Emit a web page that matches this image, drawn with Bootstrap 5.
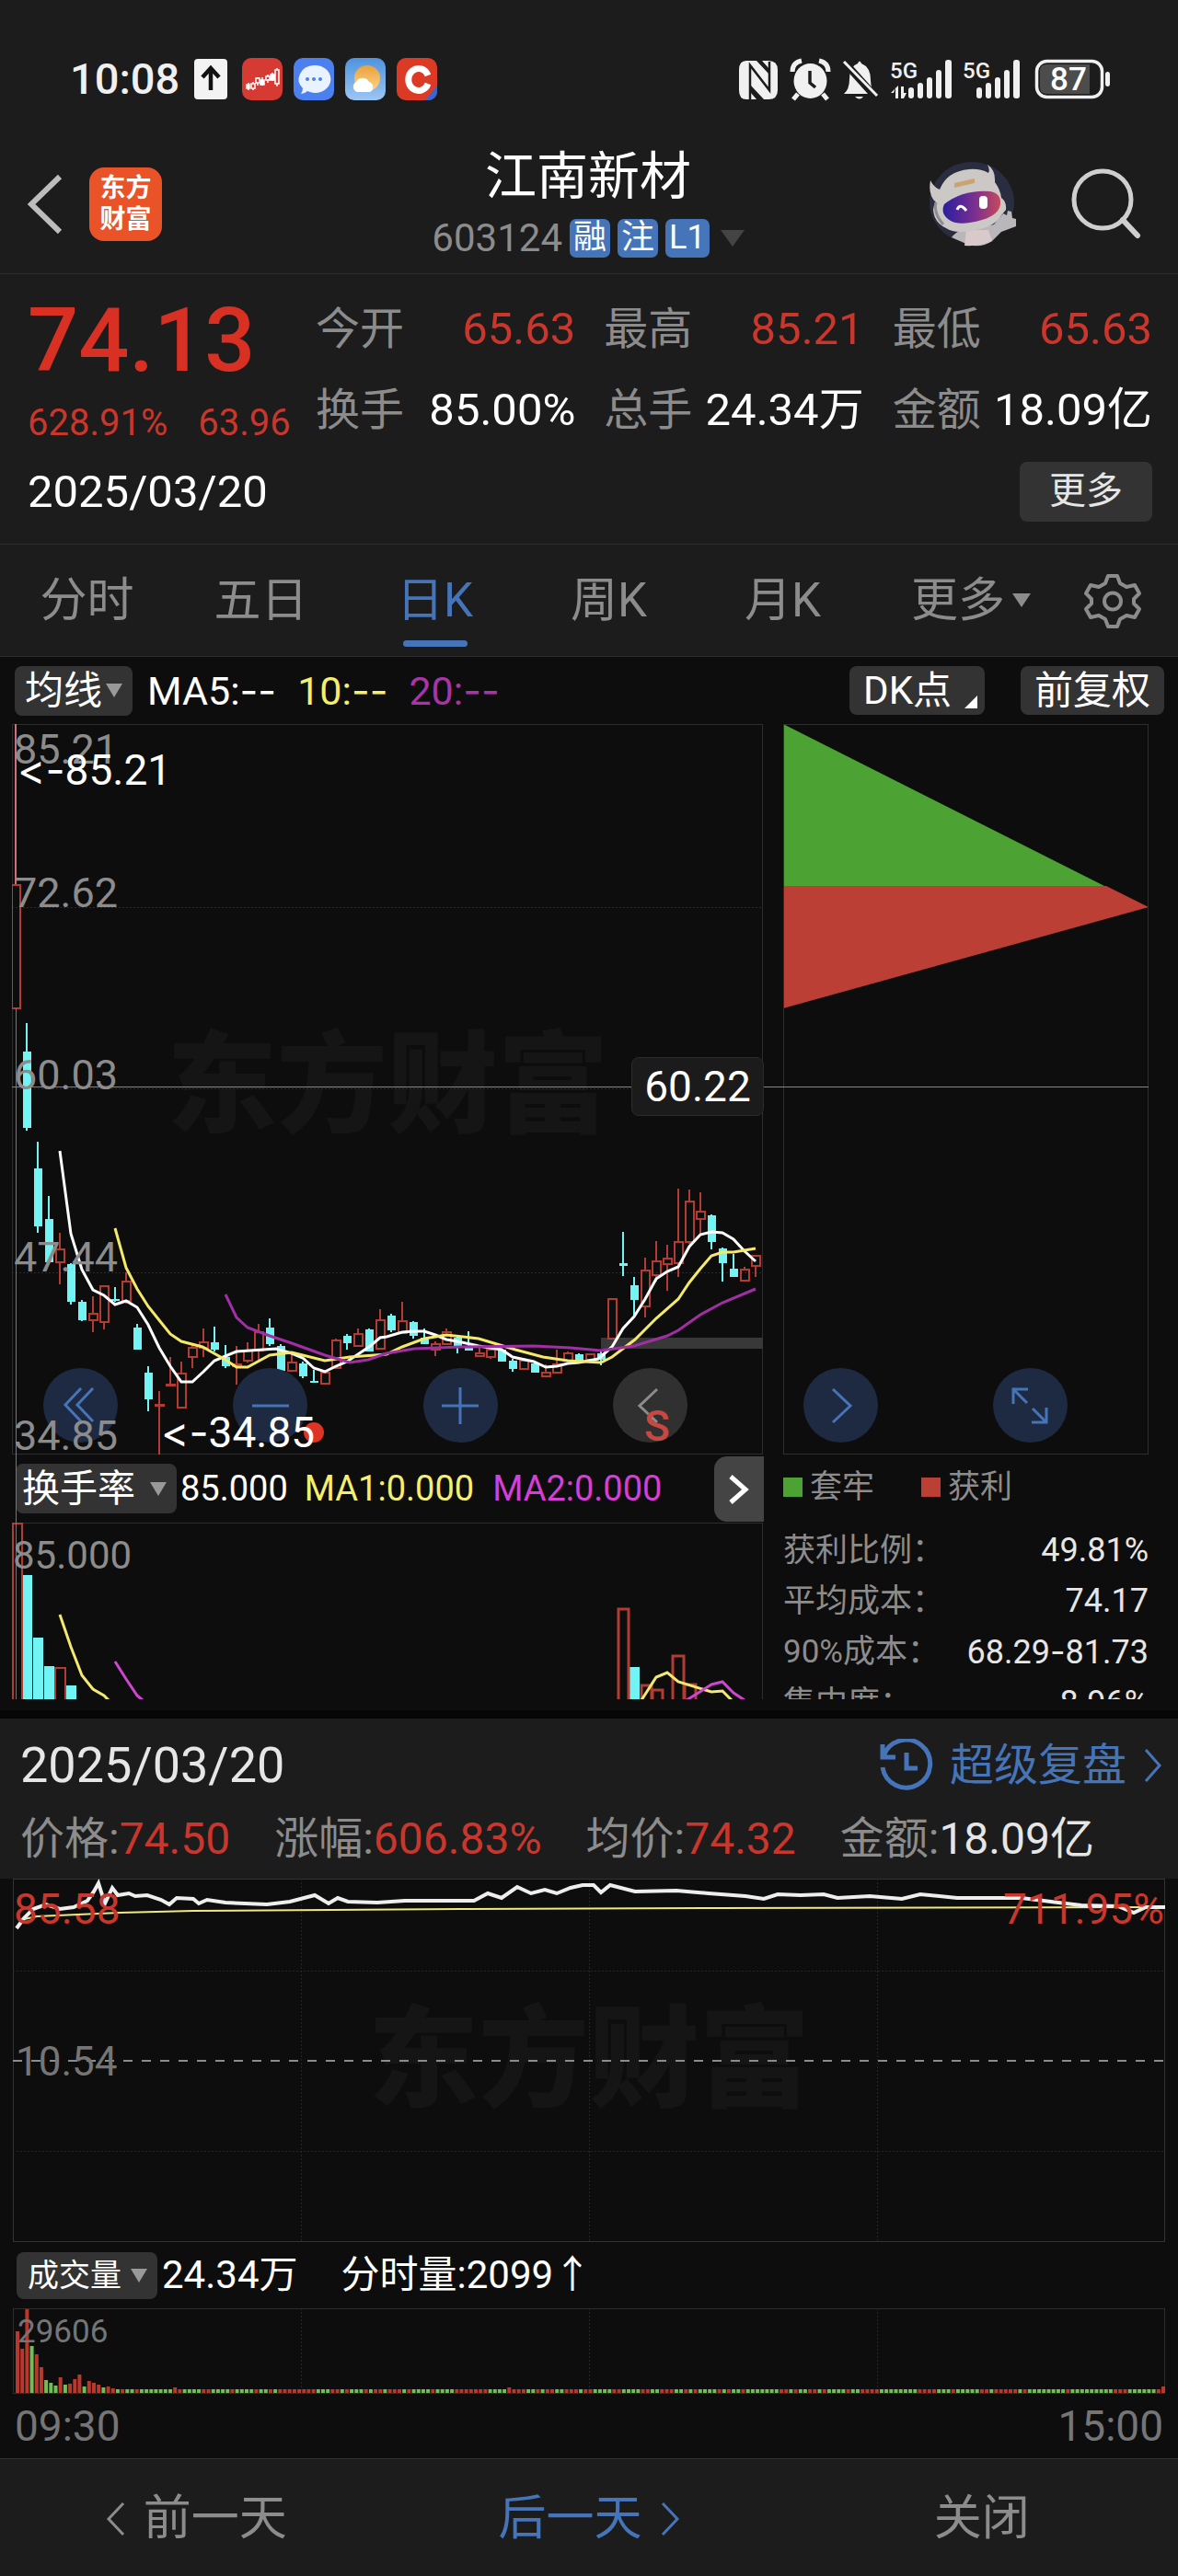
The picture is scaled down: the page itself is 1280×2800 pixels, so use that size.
<!DOCTYPE html>
<html lang="zh-CN">
<head>
<meta charset="utf-8">
<meta name="viewport" content="width=device-width, initial-scale=1">
<title>江南新材 603124</title>
<link href="https://cdn.jsdelivr.net/npm/bootstrap@5.3.0/dist/css/bootstrap.min.css" rel="stylesheet">
<style>
:root{--panel:#1c1c1c;--chart:#0d0d0d;--rule:#2d2d2d;--muted:#8c8c8c;--up:#c9372c;--blue:#4674b8;--pill:#333}
body{background:var(--panel);color:#fff;font-family:Roboto,"Noto Sans CJK SC",sans-serif;font-size:48px;line-height:1;overflow-x:hidden}
button{background:none;border:0;padding:0;color:inherit;font:inherit}
a{text-decoration:none;color:inherit}
svg{display:block;flex:none}
.t-muted{color:var(--muted)}.t-up{color:var(--up)}.t-blue{color:var(--blue)}
.t-yellow{color:#f5ee6e}.t-purple{color:#a835a8}.t-pink{color:#d63ed6}
.dash{font-family:Inter,sans-serif;font-variant-ligatures:none;font-feature-settings:"calt" 0}
.status{padding:56px 72px 34px 76px;height:150px}
.clock{font-size:47px;font-weight:500;line-height:60px;color:#f0f0f0}
.status svg{overflow:visible}
.head{padding:12px 32px 16px 30px;border-bottom:1px solid var(--rule)}
.title{font-size:56px;line-height:60px;font-weight:400}
.code{font-size:42px;line-height:44px;margin-top:15px;gap:8px}
.tagbox{background:var(--blue);border-radius:7px;height:42px;min-width:42px;padding:0 4px;font-size:36px;line-height:41px;text-align:center}
.brand{width:79px;height:80px;border-radius:16px;background:#ea5328;font-size:28px;font-weight:700;line-height:34px;padding-top:6px;text-align:center;margin-left:29px}
.side{flex:1 1 0}
.seek{margin-left:60px}
.quote{padding:16px 28px 13px 30px;border-bottom:1px solid var(--rule)}
.q-main{width:313px;padding-top:8px}
.q-price{font-size:97px;line-height:96px;font-weight:500;color:#d93024}
.q-sub{font-size:40px;line-height:60px;margin-top:12px;gap:33px}
.q-grid{display:grid;grid-template-columns:repeat(3,1fr);column-gap:31px;line-height:88px;flex:1}
.q-num,.q-date{font-size:49px}
.q-date{height:88px}
.btn-more{background:var(--pill);border-radius:8px;width:144px;height:65px;font-size:40px;color:#e6e6e6}
.tabs{height:122px;border-bottom:1px solid var(--rule);font-size:51px}
.tabs a,.tabs button{flex:189 1 0;height:121px;line-height:121px;text-align:center;position:relative;color:var(--muted)}
.tabs .more-tab{flex-grow:220}
.tabs .gear{flex-grow:87;margin-right:28px}
.tabs .active{color:var(--blue)}
.tabs .active::after{content:"";position:absolute;left:50%;bottom:10px;width:70px;height:7px;margin-left:-35px;border-radius:4px;background:var(--blue)}
.board{background:var(--chart);padding-bottom:12px;border-bottom:9px solid #060606}
.tools{height:73px;padding:0 15px 0 16px;font-size:42px}
.ma-list{font-size:43px;gap:23px;margin-left:16px}
.pick{appearance:none;border:0;border-radius:8px;color:#fff;background:var(--pill) url("data:image/svg+xml,%3Csvg xmlns='http://www.w3.org/2000/svg' viewBox='0 0 18 15'%3E%3Cpath d='M0 0h18L9 15z' fill='%23999'/%3E%3C/svg%3E") no-repeat right 11px center/18px 15px;height:54px;line-height:54px;padding:0 8px 0 11px;font-family:inherit}
.pick-ma{width:128px;font-size:42px}
.pick-turn{width:175px;font-size:41px;padding-left:7px;margin-left:4px}
.pick-vol{width:153px;font-size:34px;padding-left:12px;height:51px;line-height:51px}
.chip{background:var(--pill);border-radius:8px;height:53px;font-size:42px;line-height:53px;padding:0 15px;position:relative}
.chip-dk{padding-right:36px}
.chip-dk::after{content:"";position:absolute;right:8px;bottom:7px;border-left:14px solid transparent;border-bottom:14px solid #fff}
.charts{position:relative;padding:0 32px 0 13px;gap:22px;height:1060px;overflow:hidden}
.col-k{flex:816 1 0;min-width:0;position:relative}
.col-c{flex:397 1 0;min-width:0}
.col-k>svg,.col-c>svg,.minute svg{width:100%}
.cross{position:absolute;left:13px;right:32px;top:394px;height:1px;background:#858585}
.over{position:absolute;white-space:nowrap}
.axis{left:2px;top:5px;height:792px;font-size:45px;color:var(--muted);line-height:45px}
.axis span{position:absolute;left:0}
.water{font-size:120px;font-weight:900;color:#151515;line-height:120px}
.flag{background:#1b1b1b;border:1px solid #2b2b2b;border-radius:8px;font-size:46px;line-height:62px;width:144px;text-align:center;right:-1px;top:362px}
.pads{left:47px;right:120px;top:700px}
.pad{width:81px;height:81px;border-radius:50%;background:#1d2a42;color:var(--blue)}
.pad svg{margin:auto}
.pad-off{background:#303030;color:#8c8c8c}
.turn{height:74px;font-size:38px}
.next-ind{position:absolute;right:-1px;top:796px;width:54px;height:71px;background:#444;border-radius:14px 0 0 14px}
.legend{height:70px;font-size:35px;gap:8px}
.legend i{width:21px;height:21px}
.cost{font-size:35px;line-height:55px;margin:0;padding-top:7px}
.cost dt{font-weight:400;color:var(--muted)}
.cost dd{margin:0;font-size:36px;color:#e6e6e6}
.replay{padding:15px 16px 7px 22px}
.replay-head{font-size:54px;line-height:72px;color:#e6e6e6}
.replay-link{font-size:48px;gap:18px}
.facts{line-height:72px;margin-top:8px;gap:48px;color:#e6e6e6}
.minute{background:var(--chart);padding:0 14px}
.plot{position:relative}
.volrow{height:72px;font-size:42px;gap:5px;padding-left:4px}
.times{font-size:46px;line-height:70px;color:#757575;padding:0 2px}
.days{border-top:1px solid #333;height:128px;font-size:52px}
.days button{flex:1 1 0;gap:19px;padding-top:2px}
</style>
</head>
<body>
<header>
<div class="status d-flex justify-content-between align-items-center">
  <div class="d-flex align-items-center">
    <span class="clock">10:08</span>
    <svg class="ms-3" width="265" height="46" viewBox="0 0 265 46">
      <defs><linearGradient id="sky" x2="0" y2="1"><stop stop-color="#4f93dd"/><stop offset="1" stop-color="#9cc6f4"/></linearGradient><linearGradient id="sun" x2="0" y2="1"><stop stop-color="#e8a13c"/><stop offset="1" stop-color="#ffd489"/></linearGradient></defs>
      <rect y="1" width="36" height="44" rx="4" fill="#f3f3f3"/><path d="M18 35V13M9 21l9-10 9 10" fill="none" stroke="#111" stroke-width="4.5"/>
      <rect x="52" width="44" height="46" rx="10" fill="#d63a33"/><g stroke="#fff" stroke-width="1.5" fill="none"><path d="M59 27v8M64 26v9M69 21v9M74 21v9M80 18v9M85 16v9M90 11v20"/><path d="M57 29h3v4h-3zM72 24h4v5h-4zM83 18h4v6h-4z" fill="#fff"/><path d="M62 28h4v5h-4zM67 22h4v5h-4zM78 20h4v4h-4zM88 13h4v15h-4z" fill="#d63a33"/></g>
      <rect x="108" width="44" height="46" rx="10" fill="#4b80ee"/><path d="M130 8a17 15 0 1 1-7 28q-3 3-7 3 2-3 2-6A17 15 0 0 1 130 8z" fill="#e8f3ff"/><g fill="#4b80ee"><circle cx="123" cy="23" r="2"/><circle cx="130" cy="23" r="2"/><circle cx="137" cy="23" r="2"/></g>
      <rect x="164" width="44" height="46" rx="10" fill="url(#sky)"/><circle cx="188" cy="22" r="14" fill="url(#sun)"/><path d="M177 37a6 6 0 0 1-1-11 8 8 0 0 1 14 0 6 6 0 0 1 1 11z" fill="#fff"/>
      <rect x="220" width="44" height="46" rx="10" fill="#dc3a24"/><path d="M254 19a11 12 0 1 0 0 9" fill="none" stroke="#fff" stroke-width="7"/><path d="M264 30v7a9 9 0 0 1-9 9h-4z" fill="#3a66d0"/>
    </svg>
  </div>
  <svg width="405" height="46" viewBox="804 63 405 46">
    <g fill="#f0f0f0"><path d="M812 66h11l14 15v-6l-8-9h7q10 0 10 10v22q0 10-10 10h-5l-14-15v8l6 7h-11q-8 0-8-10V76q0-10 8-10z"/><path d="M816 108V71l21 27V67" fill="none" stroke="#1c1c1c" stroke-width="2.5"/>
    <ellipse cx="881.500" cy="88" rx="18" ry="19"/><path d="M862 78q0-10 10-12M901 78q0-10-10-12M868 102l-5 6M895 102l5 6" stroke="#f0f0f0" stroke-width="5" fill="none"/><path d="M881 77v13l6 5" fill="none" stroke="#1c1c1c" stroke-width="3.500"/>
    <path d="M918 102q6-5 6-16 0-14 9-17 2-5 4 0 10 4 10 18 0 10 6 15zM930 105h9q-4 5-9 0z"/><path d="M917 66l36 40" stroke="#1c1c1c" stroke-width="8"/><path d="M918 67l36 37" stroke="#f0f0f0" stroke-width="3"/>
    <rect x="988" y="95" width="6" height="12" rx="3"/><rect x="998" y="90" width="6" height="17" rx="3"/><rect x="1008" y="84" width="6" height="23" rx="3"/><rect x="1018" y="76" width="6" height="31" rx="3"/><rect x="1028" y="65" width="7" height="42" rx="3"/>
    <path d="M974 95v12h3V93l-8 8h3zM983 107l3-6h-3V94h-3v13z"/>
    <rect x="1062" y="95" width="6" height="12" rx="3"/><rect x="1072" y="90" width="6" height="17" rx="3"/><rect x="1082" y="84" width="6" height="23" rx="3"/><rect x="1092" y="76" width="6" height="31" rx="3"/><rect x="1102" y="65" width="7" height="42" rx="3"/>
    <text x="968" y="85" font-size="24" font-weight="500">5G</text><text x="1047" y="85" font-size="24" font-weight="500">5G</text></g>
    <rect x="1127.500" y="66.500" width="71" height="39" rx="11" fill="none" stroke="#f0f0f0" stroke-width="3.500"/><path d="M1138 70h47v32h-47q-7 0-7-7V77q0-7 7-7z" fill="#4c4c4c"/><rect x="1202" y="78" width="5" height="16" rx="3" fill="#f0f0f0"/>
    <text x="1162" y="98" font-size="35" font-weight="500" fill="#fff" text-anchor="middle">87</text>
  </svg>
</div>
<nav class="head d-flex align-items-center" aria-label="股票">
  <div class="side d-flex align-items-center">
    <button aria-label="返回"><svg width="38" height="66" viewBox="0 0 38 66"><path d="M35 3L4 33l31 30" fill="none" stroke="#bdbdbd" stroke-width="6"/></svg></button>
    <a href="#" class="brand text-white">东方<br>财富</a>
  </div>
  <div class="text-center">
    <h1 class="title m-0">江南新材</h1>
    <div class="code d-flex align-items-center justify-content-center"><span class="t-muted">603124</span><span class="tagbox">融</span><span class="tagbox">注</span><span class="tagbox">L1</span><svg class="ms-1" width="26" height="18"><path d="M0 0h26L13 18z" fill="#444"/></svg></div>
  </div>
  <div class="side d-flex align-items-center justify-content-end">
    <a href="#" aria-label="助手"><svg width="98" height="96" viewBox="0 0 98 96"><defs><linearGradient id="visor"><stop stop-color="#2a1ea0"/><stop offset=".55" stop-color="#7a2f90"/><stop offset="1" stop-color="#c64a5c"/></linearGradient></defs>
      <ellipse cx="50" cy="46" rx="46" ry="44" fill="#2a2c40"/><path d="M28 84q10-12 22-8l24-6 10-12 4 2 1-5 4 1 1 7 4 1v8l-16 6-10 10q-12 8-26 4z" fill="#b9b7ba"/><path d="M44 76h24l4 12q-12 6-30 5z" fill="#d9c9cb"/><path d="M5 22q4 8 10 10 8-20 32-22 12-1 21 4 2-3-1-9 9 6 8 19 6 8 7 17 6 4 5 13l-5 6q-6 12-28 16-22 5-32-2Q9 68 8 54q0-4 3-8Q2 38 5 22z" fill="#cbc8c6"/><path d="M20 48q20-16 50-14 12 2 11 14-2 12-20 17-24 7-34 1-12-7-7-18z" fill="url(#visor)"/><path d="M34 54q3-8 10 1" fill="none" stroke="#fff" stroke-width="3"/><rect x="58" y="39" width="9" height="14" rx="4" fill="#fff"/><path d="M31 25l22-5v5l-22 5z" fill="#caa36f"/><path d="M11 46q-3 12 8 24" stroke="#8f8d90" stroke-width="3" fill="none"/></svg></a>
    <button class="seek" aria-label="搜索"><svg width="84" height="80" viewBox="0 0 84 80"><circle cx="34" cy="35" r="31" fill="none" stroke="#cfcfcf" stroke-width="5"/><path d="M56 57l16 17" stroke="#cfcfcf" stroke-width="6" stroke-linecap="round"/></svg></button>
  </div>
</nav>
</header>
<main>
<section class="quote">
  <div class="d-flex">
    <div class="q-main"><div class="q-price">74.13</div><div class="q-sub d-flex t-up"><span>628.91%</span><span>63.96</span></div></div>
    <div class="q-grid">
      <div class="d-flex justify-content-between"><span class="t-muted">今开</span><span class="q-num t-up">65.63</span></div>
      <div class="d-flex justify-content-between"><span class="t-muted">最高</span><span class="q-num t-up">85.21</span></div>
      <div class="d-flex justify-content-between"><span class="t-muted">最低</span><span class="q-num t-up">65.63</span></div>
      <div class="d-flex justify-content-between"><span class="t-muted">换手</span><span class="q-num">85.00%</span></div>
      <div class="d-flex justify-content-between"><span class="t-muted">总手</span><span class="q-num">24.34万</span></div>
      <div class="d-flex justify-content-between"><span class="t-muted">金额</span><span class="q-num">18.09亿</span></div>
    </div>
  </div>
  <div class="q-date d-flex justify-content-between align-items-center"><span>2025/03/20</span><button class="btn-more">更多</button></div>
</section>
<nav class="tabs d-flex" aria-label="周期">
  <a href="#">分时</a><a href="#">五日</a><a href="#" class="active">日K</a><a href="#">周K</a><a href="#">月K</a>
  <button class="more-tab d-flex align-items-center justify-content-center">更多<svg class="ms-2" width="20" height="15"><path d="M0 0h20L10 15z" fill="#8c8c8c"/></svg></button>
  <button class="gear d-flex align-items-center justify-content-center" aria-label="设置"><svg width="64" height="64" viewBox="0 0 64 64" fill="none" stroke="#8c8c8c" stroke-width="4" stroke-linejoin="round"><path d="M27 5h10l3 8 7 4 9-2 5 9-6 6v5l6 6-5 9-9-2-7 4-3 8H27l-3-8-7-4-9 2-5-9 6-6v-5l-6-6 5-9 9 2 7-4z"/><circle cx="32" cy="32.500" r="9"/></svg></button>
</nav>
<section class="board">
  <div class="tools d-flex align-items-center">
    <select class="pick pick-ma" aria-label="主图指标"><option>均线</option></select>
    <div class="ma-list d-flex"><span>MA5:<span class="dash">--</span></span><span class="t-yellow">10:<span class="dash">--</span></span><span class="t-purple">20:<span class="dash">--</span></span></div>
    <button class="chip chip-dk ms-auto">DK点</button><button class="chip" style="margin-left:39px">前复权</button>
  </div>
  <div class="charts d-flex">
    <div class="col-k">
      <div class="over water" style="left:168px;top:334px">东方财富</div>
      <svg class="position-relative" height="794" viewBox="13 787 816 794" preserveAspectRatio="none" id="kline">
        <rect x="13.500" y="787.500" width="815" height="793" fill="none" stroke="#2d2d2d"/>
        <path d="M13 986.500h816M13 1183.500h816M13 1383.500h816" stroke="#2b2b2b" stroke-dasharray="2 2"/>
        <rect x="653" y="1454" width="176" height="12" fill="#383838"/>
      </svg>
      <div class="turn d-flex align-items-center">
        <select class="pick pick-turn" aria-label="副图指标"><option>换手率</option></select>
        <span class="ms-1">85.000</span><span class="t-yellow" style="margin-left:18px">MA1:0.000</span><span class="t-pink" style="margin-left:20px">MA2:0.000</span>
      </div>
      <svg height="192" viewBox="13 1655 816 192" preserveAspectRatio="none">
        <path d="M13 1655.500h816M828.500 1655v192" stroke="#2d2d2d" fill="none"/>
        <g fill="#72f4f4"><path d="M24 1712h11v135H24zM36 1780h11v67H36zM48 1811h11v36H48zM72 1832h11v15H72zM684 1812h11v35h-11z"/></g>
        <g fill="none" stroke="#b03c34" stroke-width="2"><path d="M14 1850v-194h10v194M60 1850v-37h11v37"/><path d="M672 1850v-101h11v101M697 1850v-18h11v18M709 1850v-13h11v13M731 1850v-50h12v50M744 1850v-19h12v19" stroke-width="3"/></g>
        <path d="M65 1755l12 35 12 31 12 15 12 7 5 5M697 1848l16-25 12-5 12 10 36 11 12-1 10 10" fill="none" stroke="#f3e971" stroke-width="3"/>
        <path d="M125 1806l12 19 12 18 6 5M746 1848l27-17 12-3 12 12 12 8" fill="none" stroke="#cf45cf" stroke-width="3"/>
      </svg>
      <div class="over" style="left:4px;top:309px;width:1px;height:751px;background:#777"></div>
      <div class="over t-muted" style="left:1px;top:883px;font-size:42px">85.000</div>
    </div>
    <div class="col-c">
      <svg height="794" viewBox="851 787 397 794" preserveAspectRatio="none">
        <path d="M851 787l349 176H851z" fill="#4ca334"/><path d="M851 963h351l46 23-397 110z" fill="#bc3f36"/><path d="M1195 963l-344-175v175z" fill="#4ca334"/>
        <rect x="851.500" y="787.500" width="396" height="793" fill="none" stroke="#2f2f2f"/>
      </svg>
      <div class="legend d-flex align-items-center t-muted"><i style="background:#4ca334"></i><span>套牢</span><i style="background:#bc3f36;margin-left:43px"></i><span>获利</span></div>
      <dl class="cost">
        <div class="d-flex justify-content-between"><dt>获利比例：</dt><dd>49.81%</dd></div>
        <div class="d-flex justify-content-between"><dt>平均成本：</dt><dd>74.17</dd></div>
        <div class="d-flex justify-content-between"><dt>90%成本：</dt><dd>68.29<span class="dash">-</span>81.73</dd></div>
        <div class="d-flex justify-content-between"><dt>集中度：</dt><dd>8.96%</dd></div>
      </dl>
    </div>
    <div class="cross"></div>
    <div class="over pads d-flex justify-content-between">
      <button class="pad" aria-label="最早"><svg width="40" height="40" fill="none" stroke="currentColor" stroke-width="3"><path d="M20 1L3 19l17 18M33 1L16 19l17 18"/></svg></button>
      <button class="pad" aria-label="缩小"><svg width="40" height="40" stroke="currentColor" stroke-width="3"><path d="M0 20h40"/></svg></button>
      <button class="pad" aria-label="放大"><svg width="40" height="40" stroke="currentColor" stroke-width="3"><path d="M0 20h40M20 0v40"/></svg></button>
      <button class="pad pad-off" aria-label="向左"><svg width="40" height="40" fill="none" stroke="currentColor" stroke-width="3"><path d="M27 2L8 20l19 18"/></svg></button>
      <button class="pad" aria-label="向右"><svg width="40" height="40" fill="none" stroke="currentColor" stroke-width="3"><path d="M12 2l19 18-19 18"/></svg></button>
      <button class="pad" aria-label="全屏"><svg width="40" height="40" fill="none" stroke="currentColor" stroke-width="3"><path d="M18 2H2v16M2 2l15 15M22 38h16V22M38 38L23 23"/></svg></button>
    </div>
    <div class="over" style="left:13px;right:451px;top:0;height:868px;pointer-events:none">
      <div class="over axis"><span style="top:0">85.21</span><span style="top:156px">72.62</span><span style="top:354px">60.03</span><span style="top:552px">47.44</span><span style="top:746px">34.85</span></div>
      <span class="over" style="left:6px;top:26px;font-size:46px"><span class="dash">&lt;-</span>85.21</span>
      <svg class="over" style="left:317px;top:759px" width="22" height="22"><circle cx="11" cy="11" r="11" fill="#dd3425"/></svg>
      <span class="over" style="left:162px;top:746px;font-size:46px"><span class="dash">&lt;-</span>34.85</span>
      <span class="over" style="left:687px;top:740px;font-size:46px;font-weight:500;color:#c94741">S</span>
      <span class="over flag">60.22</span>
      <button class="next-ind" aria-label="下一指标"><svg class="m-auto" width="22" height="34"><path d="M2 3l16 14L2 31" fill="none" stroke="#fff" stroke-width="5"/></svg></button>
    </div>
  </div>
</section>
<section class="replay">
  <div class="replay-head d-flex justify-content-between align-items-center"><span>2025/03/20</span>
    <a href="#" class="replay-link t-blue d-flex align-items-center"><svg width="58" height="58" viewBox="0 0 58 58" fill="none" stroke="currentColor" stroke-width="5"><path d="M4 19A26 26 0 1 1 3 31M3 6v14h14M29 15v17h12"/></svg><span>超级复盘</span><svg width="22" height="38" viewBox="0 0 22 38"><path d="M3 2l15 17L3 36" fill="none" stroke="currentColor" stroke-width="3"/></svg></a></div>
  <div class="facts d-flex"><span><span class="t-muted">价格:</span><span class="t-up">74.50</span></span><span><span class="t-muted">涨幅:</span><span class="t-up">606.83%</span></span><span><span class="t-muted">均价:</span><span class="t-up">74.32</span></span><span><span class="t-muted">金额:</span>18.09亿</span></div>
</section>
<section class="minute">
  <div class="plot">
    <div class="over water w-100 text-center" style="top:138px">东方财富</div>
    <svg class="position-relative" height="395" viewBox="14 2042 1252 395" preserveAspectRatio="none">
      <rect x="14.500" y="2042.500" width="1251" height="394" fill="none" stroke="#333"/>
      <path d="M14 2142.500h1252M14 2338.500h1252M327.500 2042v395M640.500 2042v395M953.500 2042v395" stroke="#262626" stroke-dasharray="2 2"/>
      <path d="M14 2240h1252" stroke="#8c8c8c" stroke-width="2" stroke-dasharray="10 10"/>
      <polyline fill="none" stroke="#eeea80" stroke-width="2" points="22,2087 40,2083 130,2079 210,2077 500,2075 780,2074 1266,2073"/>
      <polyline fill="none" stroke="#eee" stroke-width="4" points="18,2096 26,2085 36,2075 50,2070 65,2075 80,2073 95,2066 102,2056 107,2047 114,2069 122,2052 128,2060 140,2058 147,2061 160,2060 175,2065 184,2070 192,2063 210,2064 216,2069 225,2065 245,2068 290,2070 315,2067 342,2060 357,2069 367,2063 378,2067 410,2068 440,2066 515,2066 530,2058 545,2063 562,2051 577,2058 592,2054 605,2058 620,2052 633,2049 645,2049 653,2057 663,2049 690,2056 735,2055 770,2058 810,2061 830,2064 845,2059 870,2060 895,2059 910,2063 945,2061 980,2064 1000,2059 1040,2063 1110,2063 1150,2068 1175,2071 1215,2072 1232,2079 1245,2073 1266,2073"/>
    </svg>
    <span class="over t-up" style="left:1px;top:10px;font-size:46px">85.58</span>
    <span class="over t-up" style="right:1px;top:10px;font-size:46px">711.95%</span>
    <span class="over" style="left:3px;top:177px;font-size:44px;color:#757575">10.54</span>
  </div>
  <div class="volrow d-flex align-items-center"><select class="pick pick-vol" aria-label="分时副图"><option>成交量</option></select><span>24.34万</span><span style="margin-left:42px">分时量:2099↑</span></div>
  <div class="plot">
    <svg height="93" viewBox="14 2510 1252 93" preserveAspectRatio="none" id="vol">
      <rect x="14.500" y="2510.500" width="1251" height="92" fill="none" stroke="#2d2d2d"/>
      <path d="M327.500 2510v92M640.500 2510v92M953.500 2510v92" stroke="#262626" stroke-dasharray="2 2"/>
    </svg>
    <span class="over" style="left:5px;top:8px;font-size:35px;color:#757575">29606</span>
  </div>
  <div class="times d-flex justify-content-between"><span>09:30</span><span>15:00</span></div>
</section>
</main>
<footer class="days d-flex">
  <button class="t-muted d-flex align-items-center justify-content-center"><svg width="22" height="38" viewBox="0 0 22 38"><path d="M19 2L3 19l16 17" fill="none" stroke="currentColor" stroke-width="3"/></svg>前一天</button>
  <button class="t-blue d-flex align-items-center justify-content-center">后一天<svg width="22" height="38" viewBox="0 0 22 38"><path d="M3 2l16 17L3 36" fill="none" stroke="currentColor" stroke-width="3"/></svg></button>
  <button class="t-muted d-flex align-items-center justify-content-center">关闭</button>
</footer>
<script src="https://cdn.jsdelivr.net/npm/bootstrap@5.3.0/dist/js/bootstrap.bundle.min.js"></script>
<script>
// One entry per trading day: direction, high, body top, body bottom, low.
const days = `r787 962 1096 1096,c1112 1143 1226 1229,c1241 1270 1333 1340,c1300 1325 1372 1372,r1340 1358 1372 1396,c1373 1374 1415 1418,c1413 1415 1435 1436,r1409 1428 1435 1448,r1397 1398 1437 1445,c1399 1412 1414 1415,r1383 1393 1414 1417,c1439 1443 1467 1467,c1485 1492 1521 1534,r1512 1527 1528 1581,r1475 1505 1506 1507,r1480 1493 1530 1530,r1461 1465 1475 1487,r1444 1459 1465 1475,c1442 1459 1467 1469,c1462 1475 1485 1487,r1463 1483 1485 1505,r1459 1468 1479 1481,r1439 1448 1468 1478,c1433 1443 1461 1463,c1461 1463 1490 1494,r1469 1481 1490 1490,c1480 1482 1496 1498,c1489 1501 1503 1503,r1489 1492 1504 1504,r1455 1457 1487 1488,c1450 1452 1460 1467,r1444 1450 1463 1463,c1444 1445 1469 1469,r1423 1435 1466 1466,c1428 1430 1446 1448,r1415 1436 1449 1449,c1436 1437 1452 1455,c1444 1454 1461 1461,r1458 1461 1467 1474,r1444 1448 1461 1461,c1453 1454 1463 1471,c1447 1464 1468 1468,r1464 1471 1474 1474,r1464 1467 1475 1477,c1466 1467 1480 1480,c1477 1479 1488 1491,r1478 1479 1488 1488,c1480 1482 1492 1492,r1483 1492 1496 1496,r1467 1483 1492 1493,r1469 1471 1479 1479,c1471 1472 1479 1479,r1471 1472 1478 1478,c1469 1471 1478 1484,r1411 1412 1455 1455,c1339 1373 1376 1387,c1388 1397 1413 1430,r1367 1381 1420 1432,r1349 1371 1386 1393,r1353 1368 1374 1403,r1292 1350 1373 1388,r1293 1306 1350 1352,r1296 1317 1325 1342,c1320 1321 1350 1358,c1356 1357 1373 1393,c1363 1379 1388 1388,r1377 1380 1392 1392,r1364 1365 1376 1388`.split(',');
let shapes = '';
days.forEach((d, i) => {
  const [hi, top, bot, lo] = d.slice(1).split(' ').map(Number), x = 17 + 12 * i;
  if (d[0] === 'c') shapes += `<path d="M${x - 1} ${hi}h2v${lo - hi}h-2z" fill="#72f4f4"/><rect x="${x - 4}" y="${top}" width="9" height="${Math.max(2, bot - top)}" fill="#72f4f4"/>`;
  else shapes += `<path d="M${x} ${hi}V${top}M${x} ${bot}V${lo}" stroke="${i ? '#b03c34' : '#d0707a'}" stroke-width="2"/><rect x="${x - 4}" y="${top}" width="9" height="${Math.max(1, bot - top)}" fill="none" stroke="#b03c34" stroke-width="2"/>`;
});
const averages = [
 ['#fff','65,1251 77,1341 89,1380 101,1402 113,1408 125,1418 137,1414 149,1421 161,1440 173,1465 185,1485 197,1502 209,1502 221,1491 233,1479 245,1474 257,1469 300,1466 317,1471 329,1476 341,1487 353,1491 365,1485 377,1480 401,1464 413,1454 420,1453 437,1448 449,1447 461,1447 473,1451 485,1456 497,1458 520,1463 545,1467 557,1475 580,1480 593,1486 605,1485 617,1482 629,1481 650,1477 657,1471 665,1464 677,1444 689,1431 701,1412 713,1390 725,1382 737,1377 749,1355 761,1342 773,1339 785,1340 797,1347 809,1360 821,1371'],
 ['#f5e96a','125,1335 137,1378 149,1401 161,1420 173,1435 185,1450 197,1458 220,1464 245,1478 257,1486 269,1486 293,1473 317,1470 353,1479 380,1475 420,1472 437,1464 461,1455 485,1451 520,1455 540,1461 560,1467 590,1475 617,1479 653,1481 665,1475 690,1456 713,1433 737,1412 749,1394 761,1379 773,1365 785,1361 797,1361 821,1357'],
 ['#a02fa3','245,1407 257,1432 269,1443 293,1452 317,1460 353,1473 380,1481 400,1478 420,1471 450,1466 500,1464 580,1463 620,1465 653,1468 689,1463 725,1452 737,1446 761,1429 785,1416 821,1401']];
averages.forEach(([c, p]) => shapes += `<polyline points="${p}" fill="none" stroke="${c}" stroke-width="3"/>`);
document.getElementById('kline').insertAdjacentHTML('beforeend', shapes);

// Minute volume: the opening bars have their own heights, the rest are low.
const opening = [67,48,91,51,42,28,14,11,8,17,9,10,15,20,7,13,11,9,6,7,5];
const tone = 'rrrgrrgggrgrrrgrrrgrr' + 'grggrgggggggrrggggrrggggrggggrggrgrrrrrrrrgggrrgrgggrgrrgrrrgrggggrggggrrrrrrrggggrrrrggrgrrggrrrgrr'
 + 'ggggrrggggrrggrrrggrgrggggrgrggrgggggggrrgrggrrgrggggrggrrrrggggggggrrrrgggrgggggrrgrrrrrgrggggggggrgggggggggrrrggggggrrg';
let bars = '';
for (let i = 0; i < 241; i++) {
  const h = opening[i] || (i === 33 || i === 103 ? 6 : i === 240 ? 7 : 4), x = 17 + i * 1245 / 240;
  bars += `<rect x="${x.toFixed(1)}" y="${2602 - h}" width="4" height="${h}" fill="${(tone[i] || 'r') === 'g' ? '#6fbf55' : '#b9382d'}"/>`;
}
document.getElementById('vol').insertAdjacentHTML('beforeend', bars);
</script>
</body>
</html>
